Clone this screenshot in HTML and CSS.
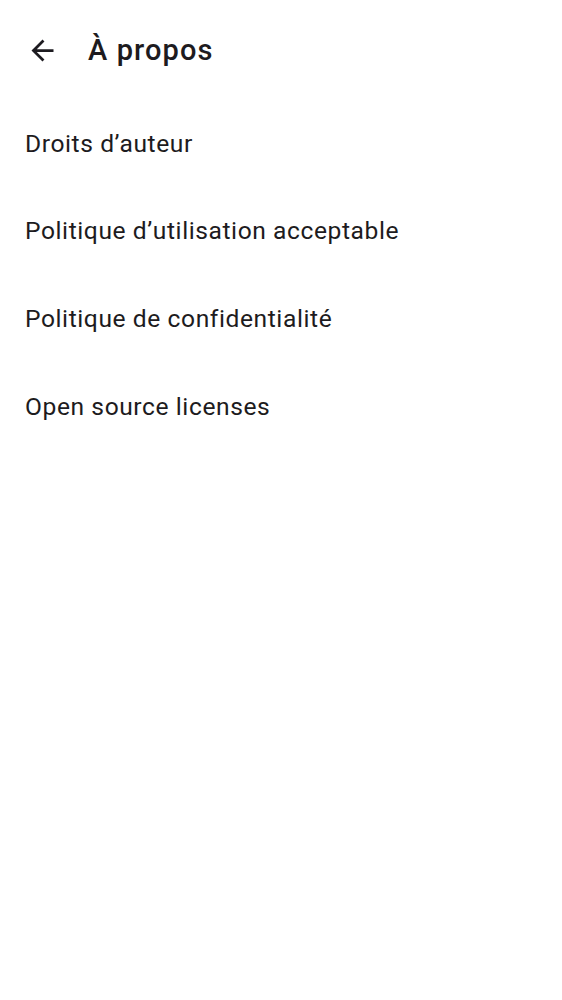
FILE: index.html
```html
<!DOCTYPE html>
<html lang="fr">
<head>
<meta charset="utf-8">
<link rel="stylesheet" href="styles.css">
</head>
<body>
<header class="topbar">
  <button class="back" aria-label="Retour">
    <svg viewBox="0 0 24 24" width="33" height="33"><path d="M20 11H7.83l5.59-5.59L12 4l-8 8 8 8 1.41-1.41L7.83 13H20v-2z" fill="#1d1b20"/></svg>
  </button>
  <h1 class="title">À propos</h1>
</header>
<ul class="list">
  <li class="item">Droits d’auteur</li>
  <li class="item">Politique d’utilisation acceptable</li>
  <li class="item">Politique de confidentialité</li>
  <li class="item">Open source licenses</li>
</ul>
</body>
</html>
```
FILE: styles.css
```css
html, body {
  margin: 0;
  padding: 0;
  background: #ffffff;
}
body {
  font-family: Roboto, "Noto Sans", sans-serif;
  color: #1d1b20;
}
.topbar {
  display: flex;
  align-items: center;
  height: 100px;
  padding-left: 26px;
}
.back {
  border: 0;
  background: none;
  padding: 0;
  width: 33px;
  height: 33px;
  display: flex;
}
.title {
  margin: 0 0 0 29px;
  font-size: 29px;
  font-weight: 500;
  letter-spacing: 1.1px;
  line-height: 36px;
}
.list {
  list-style: none;
  margin: 0;
  padding: 0;
}
.item {
  font-size: 24.6px;
  letter-spacing: 0.58px;
  line-height: 28px;
  padding: 29.8px 25px;
  height: 28px;
}
```
